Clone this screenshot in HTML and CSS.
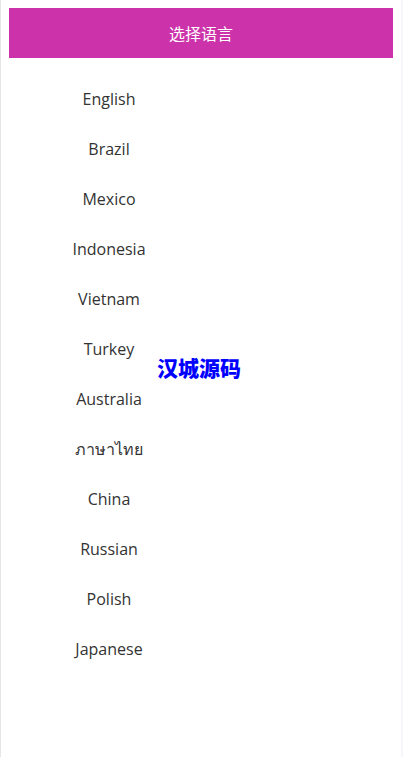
FILE: index.html
```html
<!DOCTYPE html>
<html lang="zh">
<head>
<meta charset="utf-8">
<title>选择语言</title>
<link rel="stylesheet" href="styles.css">
</head>
<body>
<div class="page">
  <header class="bar">选择语言</header>
  <ul class="langs">
    <li>English</li>
    <li>Brazil</li>
    <li>Mexico</li>
    <li>Indonesia</li>
    <li>Vietnam</li>
    <li>Turkey</li>
    <li>Australia</li>
    <li>ภาษาไทย</li>
    <li>China</li>
    <li>Russian</li>
    <li>Polish</li>
    <li>Japanese</li>
  </ul>
  <div class="mark">汉城源码</div>
</div>
</body>
</html>
```
FILE: styles.css
```css
html, body {
  margin: 0;
  padding: 0;
  background: #ffffff;
}
.page {
  position: relative;
  box-sizing: border-box;
  min-height: 757px;
  padding: 8px;
  border-left: 1px solid #e6e6e6;
  border-right: 2px solid #f6f6fa;
  font-family: "Open Sans", "Noto Sans", "Noto Sans CJK SC", sans-serif;
}
.bar {
  height: 50px;
  background: #cc33aa;
  color: #ffffff;
  font-family: "Noto Sans CJK SC", sans-serif;
  font-size: 16px;
  line-height: 50px;
  text-align: center;
}
.langs {
  list-style: none;
  margin: 16px 0 0 0;
  padding: 0;
  width: 200px;
}
.langs li {
  height: 50px;
  line-height: 50px;
  text-align: center;
  font-size: 16px;
  color: #333333;
}
.mark {
  position: absolute;
  left: 156px;
  top: 353px;
  font-family: "Noto Sans CJK SC", sans-serif;
  font-size: 21px;
  font-weight: 900;
  color: #0000ff;
  line-height: 28px;
}
```
